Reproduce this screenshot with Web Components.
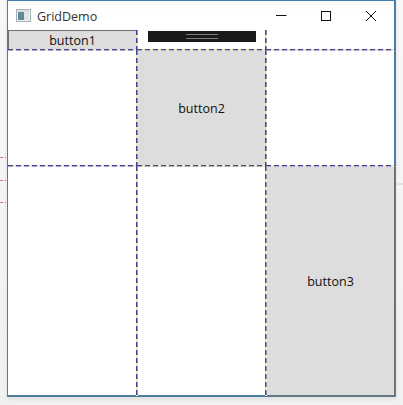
<!DOCTYPE html>
<html><head><meta charset="utf-8"><style>
html,body{margin:0;padding:0;background:#f4f4f4;width:403px;height:405px;overflow:hidden}
body{font-family:"Open Sans","Noto Sans",sans-serif;display:flow-root}
</style></head><body>
<gd-desktop>
  <gd-window title="GridDemo">
    <gd-grid>
      <gd-cell><gd-button fill>button1</gd-button></gd-cell>
      <gd-cell><gd-splitter></gd-splitter></gd-cell>
      <gd-cell></gd-cell>
      <gd-cell></gd-cell>
      <gd-cell><gd-button fill>button2</gd-button></gd-cell>
      <gd-cell></gd-cell>
      <gd-cell></gd-cell>
      <gd-cell></gd-cell>
      <gd-cell><gd-button fill>button3</gd-button></gd-cell>
    </gd-grid>
  </gd-window>
</gd-desktop>
<script>
function def(name,html,init){customElements.define(name,class extends HTMLElement{constructor(){super();this.attachShadow({mode:'open'}).innerHTML=html;}connectedCallback(){if(init)init(this);}});}
def('gd-desktop',`<style>:host{display:block;width:403px;height:405px;padding:0 0 0 7px;box-sizing:border-box;position:relative;background:linear-gradient(#f8f8f8,#f1f1f1)}
.m{position:absolute;left:0;width:6px;height:1px;background:repeating-linear-gradient(90deg,#d9737b 0 3px,#f3dfe0 3px 5px)}
.r{position:absolute;left:396px;top:183px;width:7px;height:2px;background:#e2e2e2}</style>
<i class="m" style="top:157px"></i><i class="m" style="top:180px"></i><i class="m" style="top:202px"></i><i class="r"></i><slot></slot>`);
def('gd-window',`<style>:host{display:block;width:389px;height:397px;box-sizing:border-box;background:#fff;border:1px solid #4a7fa8;border-bottom:2px solid #4f7d9f;border-right:2px solid #4a7fa8;border-top:1px solid #3f83b8;box-shadow:0 2px 5px rgba(0,0,0,.08)}
.bar{display:flex;align-items:center;height:29px;background:linear-gradient(#fffdf8,#fff 8px)}
.ic{margin:0 0 0 8px;flex:none}
.t{margin-left:6px;font-size:12.5px;color:#333;flex:1;position:relative;top:1px}
.b{width:45px;height:28px;display:flex;align-items:center;justify-content:center;flex:none}</style>
<div class="bar">
<svg class="ic" width="15" height="13" viewBox="0 0 15 13"><rect x=".5" y=".5" width="14" height="12" fill="#eef0f2" stroke="#a9b0b8"/><rect x="2" y="3" width="6" height="8" fill="#5d8b97"/><rect x="8" y="3" width="5" height="8" fill="#dfe4e8"/><rect x="2" y="1.5" width="11" height="1" fill="#c6ccd2"/></svg>
<span class="t" id="t"></span>
<span class="b"><svg width="12" height="12" viewBox="0 0 12 12"><path d="M1 5.5H11.5" stroke="#111" fill="none"/></svg></span>
<span class="b"><svg width="12" height="12" viewBox="0 0 12 12"><rect x="1.5" y="1.5" width="9" height="9" stroke="#111" fill="none"/></svg></span>
<span class="b" style="width:46px"><svg width="12" height="12" viewBox="0 0 12 12"><path d="M1 1L11 11M11 1L1 11" stroke="#111" fill="none"/></svg></span>
</div><slot></slot>`,el=>{el.shadowRoot.getElementById('t').textContent=el.getAttribute('title')});
def('gd-grid',`<style>:host{display:grid;grid-template-columns:129px 129px 129px;grid-template-rows:20px 116px 230px;width:387px;height:366px}</style><slot></slot>`);
def('gd-cell',`<style>:host{display:block;position:relative;min-width:0;min-height:0}
.v,.h{position:absolute;z-index:2;pointer-events:none}
.v{top:0;right:-1px;bottom:0;width:2px;background:repeating-linear-gradient(180deg,#45458f 0 5px,#e6e6b0 5px 8px) 0 0/1px 100% no-repeat,repeating-linear-gradient(180deg,#8f8fb8 0 5px,#f1f1d0 5px 8px) 1px 0/1px 100% no-repeat}
.h{left:0;right:0;bottom:-1px;height:2px;background:repeating-linear-gradient(90deg,#45458f 0 5px,#e6e6b0 5px 8px) 0 0/100% 1px no-repeat,repeating-linear-gradient(90deg,#a8a8cc 0 5px,#f1f1d0 5px 8px) 0 1px/100% 1px no-repeat}
:host(:nth-child(3n)) .v{display:none}
:host(:nth-child(n+7)) .h{display:none}
</style><slot></slot><i class="v"></i><i class="h"></i>`);
def('gd-button',`<style>:host{display:flex;align-items:center;justify-content:center;height:100%;box-sizing:border-box;background:#dddddd;border:1px solid #707070;font-size:12.5px;color:#111;line-height:1;padding-top:2px}</style><slot></slot>`);
def('gd-splitter',`<style>:host{display:flex;align-items:center;justify-content:center;box-sizing:border-box;width:108px;height:11px;margin:1px 0 0 11px;background:#1a1a1a}
i{display:block;width:32px;height:3px;border-top:1px solid #7a7a7a;border-bottom:1px solid #7a7a7a}</style><i></i>`);
</script>
</body></html>
